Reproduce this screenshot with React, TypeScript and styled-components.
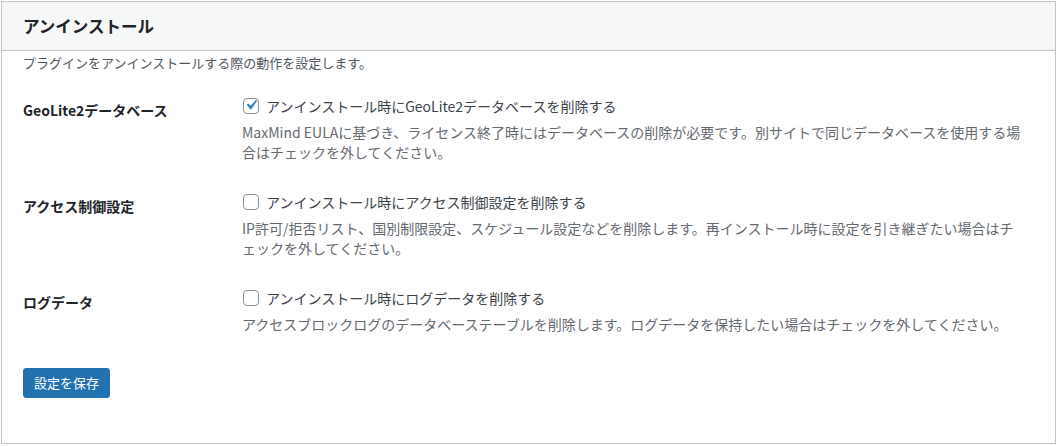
import styled, { createGlobalStyle } from "styled-components";

const GlobalStyle = createGlobalStyle`
  html, body {
    margin: 0;
    padding: 0;
    background: #ffffff;
  }
  body {
    font-family: "Noto Sans CJK JP", "Noto Sans", sans-serif;
    color: #3c434a;
  }
`;

interface Setting {
  id: string;
  label: string;
  option: string;
  description: string;
  checked: boolean;
}

const settings: Setting[] = [
  {
    id: "geolite",
    label: "GeoLite2データベース",
    option: "アンインストール時にGeoLite2データベースを削除する",
    description:
      "MaxMind EULAに基づき、ライセンス終了時にはデータベースの削除が必要です。別サイトで同じデータベースを使用する場合はチェックを外してください。",
    checked: true,
  },
  {
    id: "access",
    label: "アクセス制御設定",
    option: "アンインストール時にアクセス制御設定を削除する",
    description:
      "IP許可/拒否リスト、国別制限設定、スケジュール設定などを削除します。再インストール時に設定を引き継ぎたい場合はチェックを外してください。",
    checked: false,
  },
  {
    id: "logs",
    label: "ログデータ",
    option: "アンインストール時にログデータを削除する",
    description:
      "アクセスブロックログのデータベーステーブルを削除します。ログデータを保持したい場合はチェックを外してください。",
    checked: false,
  },
];

const Page = styled.div`
  padding: 1px 0 0 1px;
`;

const Panel = styled.section`
  box-sizing: border-box;
  width: 1055px;
  height: 443px;
  border: 1px solid #c3c4c7;
  background: #ffffff;
`;

const PanelHeader = styled.header`
  height: 48px;
  display: flex;
  align-items: center;
  padding: 0 21px;
  background: #f6f7f7;
  border-bottom: 1px solid #c3c4c7;
`;

const Heading = styled.h2`
  margin: 0;
  font-size: 16.5px;
  font-weight: 700;
  line-height: 1;
  color: #1d2327;
`;

const PanelBody = styled.div`
  padding: 0 21px;
`;

const Intro = styled.p`
  margin: 2px 0 0;
  font-size: 13px;
  line-height: 20px;
  color: #50575e;
`;

const FormTable = styled.div`
  margin-top: 7px;
`;

const Row = styled.div`
  display: grid;
  grid-template-columns: 219px 1fr;
`;

const Label = styled.div`
  padding: 20px 10px 0 0;
  font-size: 14px;
  font-weight: 700;
  line-height: 20px;
  color: #1d2327;
`;

const Field = styled.div`
  padding: 15px 10px 14px 0;
`;

const OptionLine = styled.label`
  display: flex;
  align-items: center;
  gap: 7px;
  font-size: 14px;
  line-height: 22px;
  color: #3c434a;
  cursor: pointer;
`;

const Box = styled.span<{ $checked: boolean }>`
  box-sizing: border-box;
  flex: none;
  width: 16px;
  height: 16px;
  margin-left: 1px;
  border: 1px solid #8c8f94;
  border-radius: 4px;
  background: #ffffff;
  display: flex;
  align-items: center;
  justify-content: center;
  overflow: visible;

  svg {
    display: ${(p) => (p.$checked ? "block" : "none")};
    flex: none;
    margin: -2px 0 0 -1px;
  }
`;

const Description = styled.p`
  margin: 5px 0 0;
  font-size: 14px;
  line-height: 20px;
  color: #646970;
`;

const Actions = styled.div`
  margin-top: 20px;
`;

const SaveButton = styled.button`
  box-sizing: border-box;
  height: 30px;
  padding: 0 10px;
  border: 1px solid #2271b1;
  border-radius: 3px;
  background: #2271b1;
  color: #ffffff;
  font-family: inherit;
  font-size: 13px;
  line-height: 28px;
  cursor: pointer;
`;

const CheckMark = () => (
  <svg width="20" height="20" viewBox="0 0 20 20" aria-hidden="true">
    <path
      d="M14.83 4.89l1.34.94-5.81 8.38H9.02L5.78 9.67l1.34-1.25 2.57 2.4z"
      fill="#3582c4"
    />
  </svg>
);

const App = () => {
  return (
    <Page>
      <GlobalStyle />
      <Panel>
        <PanelHeader>
          <Heading>アンインストール</Heading>
        </PanelHeader>
        <PanelBody>
          <Intro>プラグインをアンインストールする際の動作を設定します。</Intro>
          <FormTable>
            {settings.map((s) => (
              <Row key={s.id}>
                <Label>{s.label}</Label>
                <Field>
                  <OptionLine>
                    <Box $checked={s.checked}>
                      <CheckMark />
                    </Box>
                    {s.option}
                  </OptionLine>
                  <Description>{s.description}</Description>
                </Field>
              </Row>
            ))}
          </FormTable>
          <Actions>
            <SaveButton type="button">設定を保存</SaveButton>
          </Actions>
        </PanelBody>
      </Panel>
    </Page>
  );
};

export default App;
